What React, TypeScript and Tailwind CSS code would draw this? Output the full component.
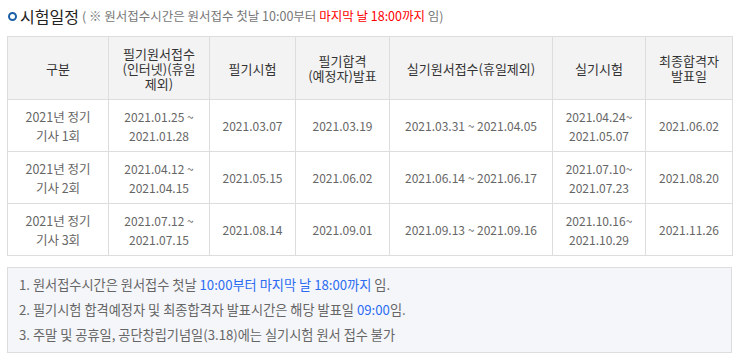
import React from 'react';

const rows = [
  ['2021년 정기', '기사 1회', '2021.01.25 ~', '2021.01.28', '2021.03.07', '2021.03.19', '2021.03.31 ~ 2021.04.05', '2021.04.24~', '2021.05.07', '2021.06.02'],
  ['2021년 정기', '기사 2회', '2021.04.12 ~', '2021.04.15', '2021.05.15', '2021.06.02', '2021.06.14 ~ 2021.06.17', '2021.07.10~', '2021.07.23', '2021.08.20'],
  ['2021년 정기', '기사 3회', '2021.07.12 ~', '2021.07.15', '2021.08.14', '2021.09.01', '2021.09.13 ~ 2021.09.16', '2021.10.16~', '2021.10.29', '2021.11.26'],
];

const font = { fontFamily: '"Noto Sans CJK KR", "Noto Sans", sans-serif' };

export default function App() {
  return (
    <div className="w-[741px] h-[361px] bg-white text-[#666]" style={font}>
      <div className="flex items-center h-[31px] pl-[8px] pt-[1px]">
        <span className="w-[9px] h-[9px] rounded-full border-[2px] border-[#1b5fa8] mr-[3px]" />
        <span className="text-[16px] text-[#222] leading-none">시험일정</span>
        <span className="text-[12.5px] text-[#777] ml-[3px] leading-none">
          ( ※ 원서접수시간은 원서접수 첫날 10:00부터 <span className="text-[#ff0000]">마지막 날 18:00까지</span> 임)
        </span>
      </div>
      <div className="pt-[5px] pl-[7px]">
        <table className="w-[725px] table-fixed border-collapse text-center">
          <colgroup>
            <col className="w-[101px]" />
            <col className="w-[101px]" />
            <col className="w-[86px]" />
            <col className="w-[94px]" />
            <col className="w-[163px]" />
            <col className="w-[93px]" />
            <col className="w-[87px]" />
          </colgroup>
          <thead>
            <tr className="h-[63px] bg-[#f3f3f3] text-[#333] text-[13px] leading-[15px]">
              <th className="border border-[#dddddd] font-normal">구분</th>
              <th className="border border-[#dddddd] font-normal px-[10px]">필기원서접수<br />(인터넷)(휴일<br />제외)</th>
              <th className="border border-[#dddddd] font-normal">필기시험</th>
              <th className="border border-[#dddddd] font-normal">필기합격<br />(예정자)발표</th>
              <th className="border border-[#dddddd] font-normal">실기원서접수(휴일제외)</th>
              <th className="border border-[#dddddd] font-normal">실기시험</th>
              <th className="border border-[#dddddd] font-normal">최종합격자<br />발표일</th>
            </tr>
          </thead>
          <tbody>
            {rows.map((r, i) => (
              <tr key={i} className="h-[52px] text-[12px] leading-[19px] text-[#666]">
                <td className="border border-[#dddddd] text-[12.5px]">{r[0]}<br />{r[1]}</td>
                <td className="border border-[#dddddd]">{r[2]}<br />{r[3]}</td>
                <td className="border border-[#dddddd]">{r[4]}</td>
                <td className="border border-[#dddddd]">{r[5]}</td>
                <td className="border border-[#dddddd]">{r[6]}</td>
                <td className="border border-[#dddddd]">{r[7]}<br />{r[8]}</td>
                <td className="border border-[#dddddd]">{r[9]}</td>
              </tr>
            ))}
          </tbody>
        </table>
      </div>
      <div className="mt-[11px] ml-[7px] w-[725px] h-[86px] border border-[#dddddd] bg-[#f5f6fa] pl-[11px] pt-[4px] text-[13.2px] leading-[25px] text-[#666]">
        <p>1. 원서접수시간은 원서접수 첫날 <span className="text-[#2a6bf2]">10:00부터 마지막 날 18:00까지</span> 임.</p>
        <p>2. 필기시험 합격예정자 및 최종합격자 발표시간은 해당 발표일 <span className="text-[#2a6bf2]">09:00</span>임.</p>
        <p>3. 주말 및 공휴일, 공단창립기념일(3.18)에는 실기시험 원서 접수 불가</p>
      </div>
    </div>
  );
}
